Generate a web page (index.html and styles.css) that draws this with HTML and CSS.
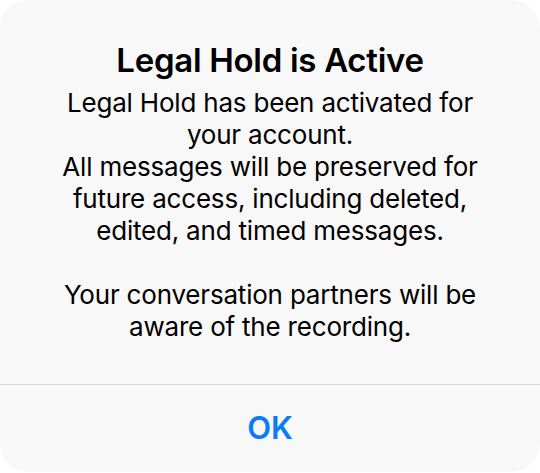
FILE: index.html
```html
<!DOCTYPE html>
<html lang="en">
<head>
<meta charset="utf-8">
<title>Legal Hold is Active</title>
<link rel="stylesheet" href="styles.css">
</head>
<body>
<div class="alert">
  <div class="alert-content">
    <h1 class="alert-title">Legal Hold is Active</h1>
    <p class="alert-message">Legal Hold has been activated for your account.<br>All messages will be preserved for future access, including deleted, edited, and timed messages.<br><br>Your conversation partners will be aware of the recording.</p>
  </div>
  <div class="alert-actions">
    <button class="alert-button">OK</button>
  </div>
</div>
</body>
</html>
```
FILE: styles.css
```css
html, body {
  margin: 0;
  padding: 0;
  background: #ffffff;
}

body {
  font-family: Inter, "Noto Sans", "Liberation Sans", sans-serif;
  color: #000000;
}

.alert {
  width: 540px;
  height: 472px;
  background: #f8f8f8;
  border-radius: 28px;
  display: flex;
  flex-direction: column;
  overflow: hidden;
}

.alert-content {
  padding: 40px 40px 41px;
  text-align: center;
}

.alert-title {
  margin: 0 0 7px;
  font-size: 33px;
  line-height: 40px;
  font-weight: 600;
  letter-spacing: -0.3px;
}

.alert-message {
  margin: 0;
  font-size: 26px;
  line-height: 32px;
  font-weight: 400;
  letter-spacing: -0.2px;
}

.alert-actions {
  flex: 1;
  display: flex;
  border-top: 1px solid #d9d9d9;
}

.alert-button {
  flex: 1;
  border: none;
  background: transparent;
  font-family: inherit;
  font-size: 31px;
  font-weight: 600;
  color: #0a7aff;
  padding: 0 0 2px;
  cursor: pointer;
}
```
